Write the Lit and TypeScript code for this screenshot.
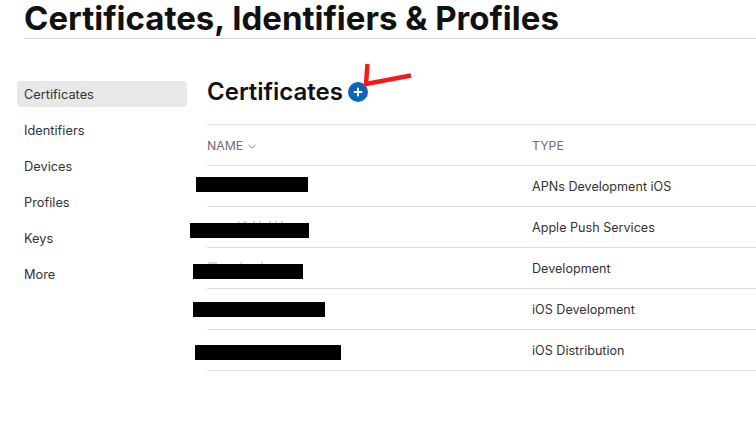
import { LitElement, css, html } from "lit";
import { customElement } from "lit/decorators.js";

const NAV = ["Certificates", "Identifiers", "Devices", "Profiles", "Keys", "More"];

const ROWS = [
  "APNs Development iOS",
  "Apple Push Services",
  "Development",
  "iOS Development",
  "iOS Distribution",
];

// black boxes painted over the name column: left, top, width, height
const REDACTIONS = [
  [196, 177, 112, 15],
  [190, 223, 119, 15],
  [193, 264, 110, 15],
  [193, 302, 132, 15],
  [195, 345, 146, 15],
];

// grey tips of the hidden names that stick out above the boxes: left, top, width
const TIPS = [
  [238, 221, 2],
  [243, 221, 4],
  [253, 221, 2],
  [259, 221, 2],
  [269, 221, 2],
  [275, 221, 2],
  [281, 221, 2],
  [208, 262, 9],
  [240, 262, 2],
  [261, 262, 2],
];

@customElement("app-root")
export class AppRoot extends LitElement {
  render() {
    return html`
      <div class="page">
        <h1>Certificates, Identifiers &amp; Profiles</h1>
        <div class="body">
          <nav>
            ${NAV.map(
              (item, i) =>
                html`<div class="nav-item ${i === 0 ? "active" : ""}">${item}</div>`
            )}
          </nav>
          <main>
            <div class="heading">
              <h2>Certificates</h2>
              <svg class="add" width="20" height="20" viewBox="0 0 20 20">
                <circle cx="10" cy="10" r="10" fill="#0a66bd" />
                <path
                  d="M10 6.500v7M6.500 10h7"
                  stroke="#fff"
                  stroke-width="2"
                  stroke-linecap="round"
                />
              </svg>
            </div>
            <div class="row head">
              <div class="name">
                NAME
                <svg width="8" height="5" viewBox="0 0 8 5">
                  <path d="M.5.8 4 4.200 7.500.8" fill="none" stroke="#8a8a8e" stroke-width="1" />
                </svg>
              </div>
              <div>TYPE</div>
            </div>
            ${ROWS.map(
              (type) => html`<div class="row"><div class="name"></div><div>${type}</div></div>`
            )}
          </main>
        </div>
        ${TIPS.map(
          ([x, y, w]) => html`<div class="tip" style="left:${x}px;top:${y}px;width:${w}px"></div>`
        )}
        ${REDACTIONS.map(
          ([x, y, w, h]) =>
            html`<div
              class="redact"
              style="left:${x}px;top:${y}px;width:${w}px;height:${h}px"
            ></div>`
        )}
        <svg class="scribble" width="60" height="30" viewBox="0 0 60 30">
          <path
            d="M7.500 4 L6 24 L51 15.500"
            fill="none"
            stroke="#f5191c"
            stroke-width="4.500"
            stroke-linejoin="miter"
          />
        </svg>
      </div>
    `;
  }

  static styles = css`
    :host {
      display: block;
      font-family: Inter, "Liberation Sans", sans-serif;
      color: #1d1d1f;
      background: #fff;
    }
    .page {
      position: relative;
      height: 421px;
      overflow: hidden;
      padding-left: 24px;
      box-sizing: border-box;
    }
    h1 {
      margin: 0;
      height: 39px;
      box-sizing: border-box;
      border-bottom: 1px solid #d8d8d8;
      font-size: 33px;
      line-height: 36px;
      font-weight: 700;
      color: #111;
    }
    .body {
      display: flex;
      margin-left: -7px;
      padding-top: 42px;
    }
    nav {
      width: 170px;
      flex: none;
      margin-right: 20px;
    }
    .nav-item {
      height: 26px;
      line-height: 28px;
      margin-bottom: 10px;
      padding-left: 7px;
      border-radius: 4px;
      font-size: 12.800px;
      color: #333;
    }
    .nav-item.active {
      background: #e8e8e8;
    }
    main {
      flex: 1;
    }
    .heading {
      display: flex;
      align-items: flex-start;
      gap: 5px;
      height: 43px;
      border-bottom: 1px solid #dedede;
    }
    h2 {
      margin: 0;
      font-size: 24px;
      line-height: 22px;
      font-weight: 600;
      color: #111;
    }
    .add {
      flex: none;
      margin-top: 1px;
    }
    .row {
      display: flex;
      align-items: center;
      height: 41px;
      box-sizing: border-box;
      border-bottom: 1px solid #dedede;
      font-size: 12.600px;
      color: #333;
    }
    .row.head {
      color: #6e6e73;
      font-size: 12.300px;
    }
    .name {
      width: 325px;
      flex: none;
    }
    .name svg {
      margin-left: 1px;
      vertical-align: 1px;
    }
    .redact {
      position: absolute;
      background: #000;
    }
    .tip {
      position: absolute;
      height: 2px;
      background: #dadada;
    }
    .scribble {
      position: absolute;
      left: 360px;
      top: 60px;
    }
  `;
}
